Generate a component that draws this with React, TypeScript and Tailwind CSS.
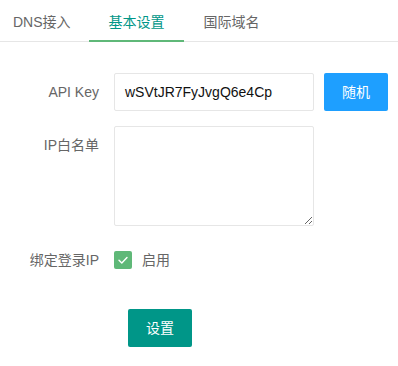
import React from "react";

export default function App() {
  const font = { fontFamily: '"Liberation Sans", "Noto Sans CJK SC", sans-serif' };
  return (
    <div className="w-[398px] h-[366px] bg-white text-[14px] relative overflow-hidden" style={font}>
      <div className="flex h-[42px] border-b border-[#e6e6e6]">
        <div className="w-[89px] pl-[13px] pt-[3px] leading-[38px] text-[#666]">DNS接入</div>
        <div className="relative w-[95px] text-center pt-[3px] leading-[38px] text-[#009688]">
          基本设置
          <span className="absolute left-0 right-0 bottom-[-1px] h-[2px] bg-[#5FB878]" />
        </div>
        <div className="w-[95px] text-center pt-[3px] leading-[38px] text-[#666]">国际域名</div>
      </div>

      <div className="mt-[31px]">
        <div className="flex items-center h-[38px]">
          <div className="w-[114px] pr-[15px] text-right text-[#666]">API Key</div>
          <div className="w-[200px] h-[38px] border border-[#e6e6e6] rounded-[2px] pl-[10px] flex items-center text-[#111]">
            wSVtJR7FyJvgQ6e4Cp
          </div>
          <button className="ml-[10px] w-[64px] h-[38px] rounded-[2px] bg-[#1E9FFF] text-white">随机</button>
        </div>

        <div className="flex mt-[15px]">
          <div className="w-[114px] pr-[15px] pt-[9px] leading-[20px] text-right text-[#666]">IP白名单</div>
          <textarea className="w-[200px] h-[100px] border border-[#e6e6e6] rounded-[2px] outline-none px-[10px] py-[6px]" />
        </div>

        <div className="flex items-center h-[38px] mt-[15px]">
          <div className="w-[114px] pr-[15px] text-right text-[#666]">绑定登录IP</div>
          <span className="w-[18px] h-[18px] rounded-[2px] bg-[#5FB878] flex items-center justify-center">
            <svg width="12" height="12" viewBox="0 0 12 12" fill="none">
              <path d="M2 6.2 L4.8 9 L10 3.4" stroke="white" strokeWidth="1.4" strokeLinecap="round" strokeLinejoin="round" />
            </svg>
          </span>
          <span className="ml-[10px] text-[#666]">启用</span>
        </div>

        <div className="mt-[30px] pl-[128px]">
          <button className="w-[64px] h-[38px] rounded-[2px] bg-[#009688] text-white">设置</button>
        </div>
      </div>
    </div>
  );
}
